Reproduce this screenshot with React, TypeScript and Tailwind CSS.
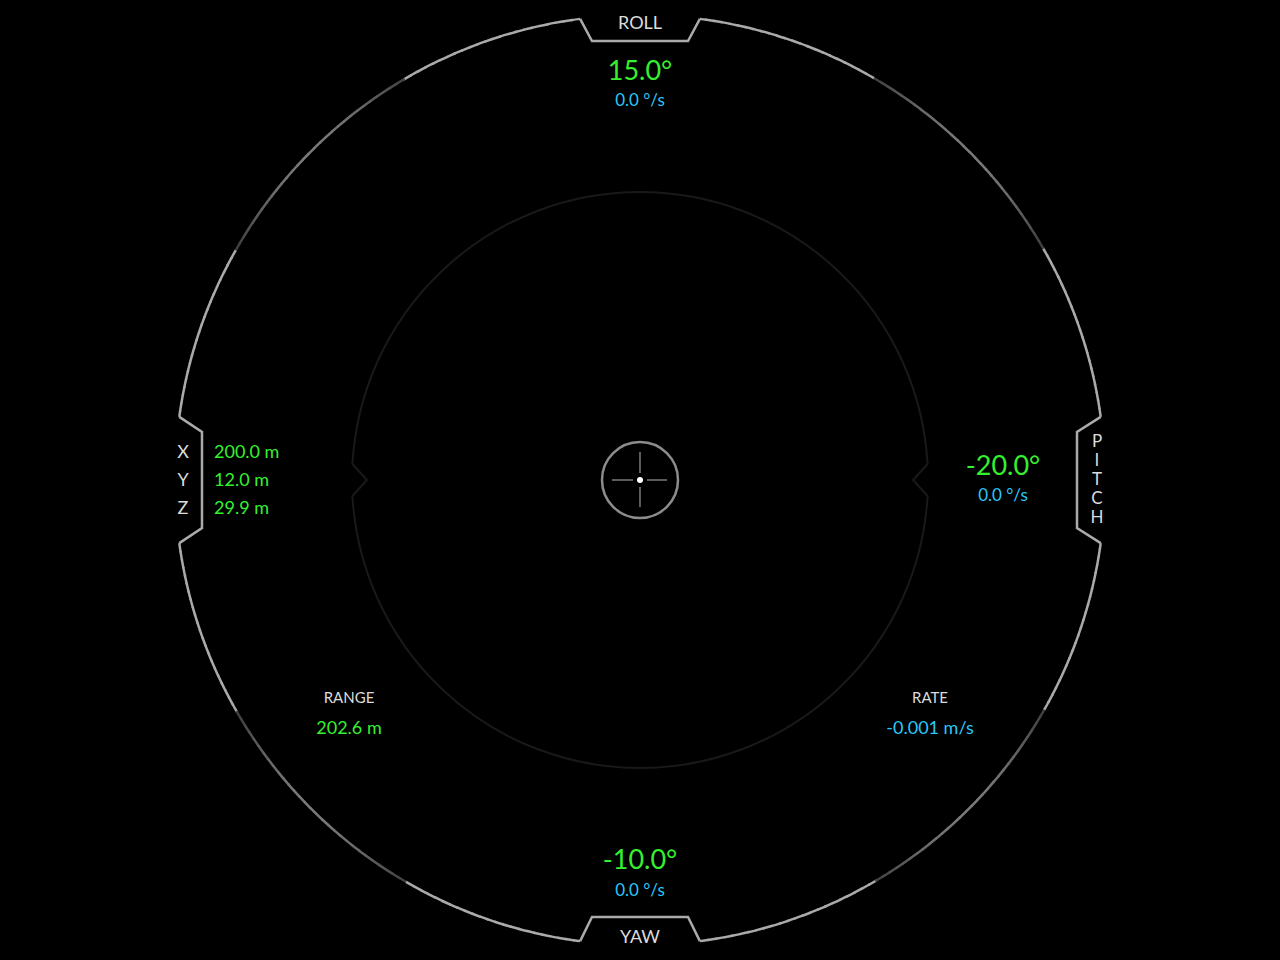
import React from 'react';

const CX = 640;
const CY = 480;
const R = 465;
const RIN = 288;

// point on a circle, angle in degrees (math orientation, y up)
function pt(r: number, deg: number): [number, number] {
  const a = (deg * Math.PI) / 180;
  return [CX + r * Math.cos(a), CY - r * Math.sin(a)];
}

// stroke brightness of the outer ring: dim band between 30° and 60° off horizontal
function shade(deg: number) {
  const d = ((deg % 180) + 180) % 180;
  const h = d <= 90 ? d : 180 - d;
  if (h < 30 || h > 60) return 170;
  const t = (h - 30) / 30;
  return Math.round(62 + 60 * Math.sin(Math.PI * t));
}

const ARCS: [number, number][] = [
  [7.8, 82.6],
  [97.4, 172.2],
  [187.8, 262.6],
  [277.4, 352.2],
];

function OuterRing() {
  const pieces: React.ReactNode[] = [];
  ARCS.forEach(([from, to], i) => {
    for (let a = from; a < to; a += 1) {
      const b = Math.min(a + 1.15, to);
      const [x1, y1] = pt(R, a);
      const [x2, y2] = pt(R, b);
      const v = shade(a + 0.5);
      pieces.push(
        <path
          key={`${i}-${a}`}
          d={`M${x1} ${y1} A${R} ${R} 0 0 0 ${x2} ${y2}`}
          stroke={`rgb(${v},${v},${v})`}
          strokeWidth={2.5}
          fill="none"
        />
      );
    }
  });

  const notch = '#aaaaaa';
  const [tx1, ty1] = pt(R, 82.6);
  const [tx2, ty2] = pt(R, 97.4);
  const [lx1, ly1] = pt(R, 172.2);
  const [lx2, ly2] = pt(R, 187.8);
  const [bx1, by1] = pt(R, 262.6);
  const [bx2, by2] = pt(R, 277.4);
  const [rx1, ry1] = pt(R, 352.2);
  const [rx2, ry2] = pt(R, 7.8);

  return (
    <g>
      {pieces}
      <g stroke={notch} strokeWidth={2.5} fill="none" strokeLinejoin="miter">
        <polyline points={`${tx1},${ty1} 688,41 592,41 ${tx2},${ty2}`} />
        <polyline points={`${lx1},${ly1} 202,432 202,528 ${lx2},${ly2}`} />
        <polyline points={`${bx1},${by1} 592,917 688,917 ${bx2},${by2}`} />
        <polyline points={`${rx2},${ry2} 1077,432 1077,528 ${rx1},${ry1}`} />
      </g>
    </g>
  );
}

function InnerRing() {
  const n = 3.18;
  const [a1x, a1y] = pt(RIN, n);
  const [a2x, a2y] = pt(RIN, 180 - n);
  const [a3x, a3y] = pt(RIN, 180 + n);
  const [a4x, a4y] = pt(RIN, 360 - n);
  const d = `M${a1x} ${a1y} A${RIN} ${RIN} 0 0 0 ${a2x} ${a2y} L367 480 L${a3x} ${a3y} A${RIN} ${RIN} 0 0 0 ${a4x} ${a4y} L913 480 Z`;
  return <path d={d} stroke="#191919" strokeWidth={2} fill="none" />;
}

function Crosshair() {
  return (
    <g>
      <circle cx={CX} cy={CY} r={38} stroke="#8c8c8c" strokeWidth={2.5} fill="none" />
      <g stroke="#666666" strokeWidth={1.8}>
        <line x1={612} y1={CY} x2={633} y2={CY} />
        <line x1={647} y1={CY} x2={667} y2={CY} />
        <line x1={CX} y1={452} x2={CX} y2={473} />
        <line x1={CX} y1={487} x2={CX} y2={507} />
      </g>
      <circle cx={CX} cy={CY} r={3} fill="#ffffff" />
    </g>
  );
}

export default function App() {
  return (
    <div
      className="relative w-[1280px] h-[960px] overflow-hidden bg-black text-[#dcdcdc]"
      style={{ fontFamily: 'Lato, "Open Sans", sans-serif' }}
    >
      <svg className="absolute inset-0" width={1280} height={960} viewBox="0 0 1280 960">
        <InnerRing />
        <OuterRing />
        <Crosshair />
      </svg>

      {/* roll */}
      <div className="absolute left-[640px] top-[13px] -translate-x-1/2 flex flex-col items-center whitespace-nowrap">
        <span className="text-[18px] leading-[18px]">ROLL</span>
        <span className="mt-[25px] text-[27px] leading-[28px] text-[#36f02f]">15.0°</span>
        <span className="text-[17px] leading-[18px] mt-[7px] text-[#28c8f8]">0.0 °/s</span>
      </div>

      {/* yaw */}
      <div className="absolute left-[640px] top-[845px] -translate-x-1/2 flex flex-col items-center whitespace-nowrap">
        <span className="text-[27px] leading-[28px] text-[#36f02f]">-10.0°</span>
        <span className="text-[17px] leading-[18px] mt-[8px] text-[#28c8f8]">0.0 °/s</span>
        <span className="mt-[28px] text-[18px] leading-[18px]">YAW</span>
      </div>

      {/* xyz */}
      <div className="absolute left-[175px] top-[437px] flex gap-[23px] text-[18px] leading-[28px]">
        <div className="flex flex-col items-center w-[16px]">
          <span>X</span>
          <span>Y</span>
          <span>Z</span>
        </div>
        <div className="flex flex-col text-[#36f02f] whitespace-nowrap">
          <span>200.0 m</span>
          <span>12.0 m</span>
          <span>29.9 m</span>
        </div>
      </div>

      {/* pitch */}
      <div className="absolute left-[1003px] top-[451px] -translate-x-1/2 flex flex-col items-center whitespace-nowrap">
        <span className="text-[27px] leading-[28px] text-[#36f02f]">-20.0°</span>
        <span className="text-[17px] leading-[18px] mt-[7px] text-[#28c8f8]">0.0 °/s</span>
      </div>
      <div className="absolute left-[1097px] top-[431px] -translate-x-1/2 flex flex-col items-center text-[17px] leading-[19px]">
        <span>P</span>
        <span>I</span>
        <span>T</span>
        <span>C</span>
        <span>H</span>
      </div>

      {/* range */}
      <div className="absolute left-[349px] top-[689px] -translate-x-1/2 flex flex-col items-center whitespace-nowrap">
        <span className="text-[15px] leading-[16px]">RANGE</span>
        <span className="mt-[13px] text-[18px] leading-[18px] text-[#36f02f]">202.6 m</span>
      </div>

      {/* rate */}
      <div className="absolute left-[930px] top-[689px] -translate-x-1/2 flex flex-col items-center whitespace-nowrap">
        <span className="text-[15px] leading-[16px]">RATE</span>
        <span className="mt-[13px] text-[18px] leading-[18px] text-[#28c8f8]">-0.001 m/s</span>
      </div>
    </div>
  );
}
